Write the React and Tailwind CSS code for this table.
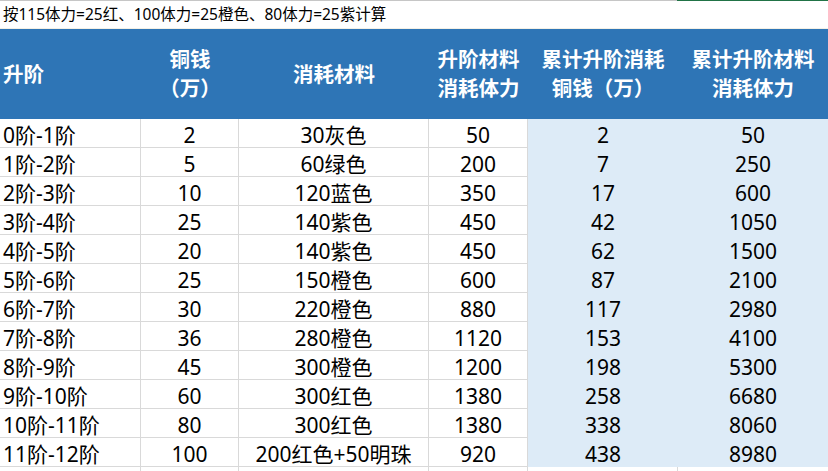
import React from "react";

const rows = [
  ["0阶-1阶", "2", "30灰色", "50", "2", "50"],
  ["1阶-2阶", "5", "60绿色", "200", "7", "250"],
  ["2阶-3阶", "10", "120蓝色", "350", "17", "600"],
  ["3阶-4阶", "25", "140紫色", "450", "42", "1050"],
  ["4阶-5阶", "20", "140紫色", "450", "62", "1500"],
  ["5阶-6阶", "25", "150橙色", "600", "87", "2100"],
  ["6阶-7阶", "30", "220橙色", "880", "117", "2980"],
  ["7阶-8阶", "36", "280橙色", "1120", "153", "4100"],
  ["8阶-9阶", "45", "300橙色", "1200", "198", "5300"],
  ["9阶-10阶", "60", "300红色", "1380", "258", "6680"],
  ["10阶-11阶", "80", "300红色", "1380", "338", "8060"],
  ["11阶-12阶", "100", "200红色+50明珠", "920", "438", "8980"],
];

const font = { fontFamily: '"Noto Sans", "Noto Sans CJK SC", sans-serif' };

export default function App() {
  return (
    <div className="w-[828px] h-[471px] overflow-hidden bg-white text-black" style={font}>
      {/* top border strip */}
      <div className="flex h-[1px]">
        <div className="w-[677px] bg-[#c6c6c6]" />
        <div className="flex-1 bg-[#217346]" />
      </div>
      {/* note row */}
      <div className="h-[28px] flex items-center pl-[3px] text-[15.5px] leading-none whitespace-nowrap border-b border-[#f3f0e6]">
        按115体力=25红、100体力=25橙色、80体力=25紫计算
      </div>
      {/* header */}
      <div className="grid grid-cols-[141px_98px_190px_99px_150px_150px] h-[90px] bg-[#2e75b6] text-white font-bold text-[20.5px] leading-[29px]">
        <div className="flex items-center pl-[3px]">升阶</div>
        <div className="flex flex-col items-center justify-center">
          <span>铜钱</span>
          <span>（万）</span>
        </div>
        <div className="flex items-center justify-center">消耗材料</div>
        <div className="flex flex-col items-center justify-center">
          <span>升阶材料</span>
          <span>消耗体力</span>
        </div>
        <div className="flex flex-col items-center justify-center">
          <span>累计升阶消耗</span>
          <span>铜钱（万）</span>
        </div>
        <div className="flex flex-col items-center justify-center">
          <span>累计升阶材料</span>
          <span>消耗体力</span>
        </div>
      </div>
      {/* data */}
      <div className="grid grid-cols-[141px_98px_190px_99px_150px_150px] text-[21px] leading-[24px]">
        {rows.map((r, i) => (
          <React.Fragment key={i}>
            <div className="h-[29px] pt-[4px] pl-[3px] border-r border-b border-[#d9d9d9] whitespace-nowrap">{r[0]}</div>
            <div className="h-[29px] pt-[4px] text-center border-r border-b border-[#d9d9d9]">{r[1]}</div>
            <div className="h-[29px] pt-[4px] text-center border-r border-b border-[#d9d9d9] whitespace-nowrap">{r[2]}</div>
            <div className="h-[29px] pt-[4px] text-center border-r border-b border-[#d9d9d9]">{r[3]}</div>
            <div className="h-[29px] pt-[4px] text-center bg-[#ddebf7]">{r[4]}</div>
            <div className="h-[29px] pt-[4px] text-center bg-[#ddebf7]">{r[5]}</div>
          </React.Fragment>
        ))}
        <div className="h-[4px] border-r border-[#d9d9d9]" />
        <div className="h-[4px] border-r border-[#d9d9d9]" />
        <div className="h-[4px] border-r border-[#d9d9d9]" />
        <div className="h-[4px] border-r border-[#d9d9d9]" />
        <div className="h-[4px] border-r border-[#d9d9d9]" />
        <div className="h-[4px]" />
      </div>
    </div>
  );
}
